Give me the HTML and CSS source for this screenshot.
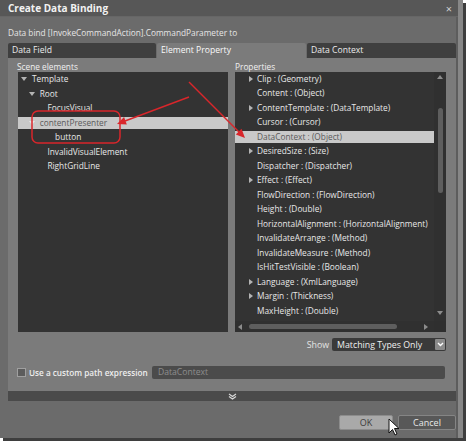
FILE: index.html
```html
<!DOCTYPE html>
<html>
<head>
<meta charset="utf-8">
<title>Create Data Binding</title>
<link rel="stylesheet" href="styles.css">
</head>
<body>
<div class="window">
  <div class="titlebar">
    <span class="title">Create Data Binding</span>
    <span class="close">×</span>
  </div>
  <div class="prompt">Data bind [InvokeCommandAction].CommandParameter to</div>
  <div class="tabs">
    <div class="tab">Data Field</div>
    <div class="tab active">Element Property</div>
    <div class="tab">Data Context</div>
  </div>
  <div class="tabpanel">
    <div class="columns">
      <div class="col col-left">
        <div class="label label-left">Scene elements</div>
        <div class="list tree">
          <div class="row lvl0"><span class="tw down"></span>Template</div>
          <div class="row lvl1"><span class="tw down"></span>Root</div>
          <div class="row lvl2"><span class="tw"></span>FocusVisual</div>
          <div class="row lvl1 selected"><span class="tw down"></span>contentPresenter</div>
          <div class="row lvl3"><span class="tw"></span>button</div>
          <div class="row lvl2"><span class="tw"></span>InvalidVisualElement</div>
          <div class="row lvl2"><span class="tw"></span>RightGridLine</div>
        </div>
      </div>
      <div class="col col-right">
        <div class="label">Properties</div>
        <div class="list plist">
          <div class="items">
            <div class="row"><span class="tw right"></span>Clip : (Geometry)</div>
            <div class="row"><span class="tw"></span>Content : (Object)</div>
            <div class="row"><span class="tw right"></span>ContentTemplate : (DataTemplate)</div>
            <div class="row"><span class="tw"></span>Cursor : (Cursor)</div>
            <div class="row selected"><span class="tw"></span>DataContext : (Object)</div>
            <div class="row"><span class="tw right"></span>DesiredSize : (Size)</div>
            <div class="row"><span class="tw"></span>Dispatcher : (Dispatcher)</div>
            <div class="row"><span class="tw right"></span>Effect : (Effect)</div>
            <div class="row"><span class="tw"></span>FlowDirection : (FlowDirection)</div>
            <div class="row"><span class="tw"></span>Height : (Double)</div>
            <div class="row"><span class="tw"></span>HorizontalAlignment : (HorizontalAlignment)</div>
            <div class="row"><span class="tw"></span>InvalidateArrange : (Method)</div>
            <div class="row"><span class="tw"></span>InvalidateMeasure : (Method)</div>
            <div class="row"><span class="tw"></span>IsHitTestVisible : (Boolean)</div>
            <div class="row"><span class="tw right"></span>Language : (XmlLanguage)</div>
            <div class="row"><span class="tw right"></span>Margin : (Thickness)</div>
            <div class="row"><span class="tw"></span>MaxHeight : (Double)</div>
          </div>
          <div class="vscroll">
            <span class="sarrow up"></span>
            <span class="vthumb"></span>
            <span class="sarrow dn"></span>
          </div>
          <div class="hscroll">
            <span class="sarrow lt"></span>
            <span class="hthumb"></span>
            <span class="sarrow rt"></span>
          </div>
          <div class="corner"></div>
        </div>
      </div>
    </div>
    <div class="showrow">
      <span class="showlabel">Show</span>
      <div class="select">
        <span class="selvalue">Matching Types Only</span>
        <span class="dd">
          <svg width="7" height="5" viewBox="0 0 7 5"><path d="M1 1 L3.5 3.5 L6 1" fill="none" stroke="#fff" stroke-width="1.4"/></svg>
        </span>
      </div>
    </div>
    <div class="pathrow">
      <span class="check"></span>
      <span class="pathlabel">Use a custom path expression</span>
      <div class="pathinput">DataContext</div>
    </div>
  </div>
  <div class="expander">
    <svg width="9" height="7" viewBox="0 0 9 7"><path d="M1 1 L4.5 3.5 L8 1 M1 3.5 L4.5 6 L8 3.5" fill="none" stroke="#d8d8d8" stroke-width="1.2"/></svg>
  </div>
  <div class="buttons">
    <button class="btn ok">OK</button>
    <button class="btn cancel">Cancel</button>
  </div>
</div>

<!-- red callouts drawn over the dialog -->
<svg class="marks" width="469" height="446" viewBox="0 0 469 446">
  <rect x="32" y="111" width="88" height="32" rx="6" ry="6" fill="none" stroke="#d9262b" stroke-width="1.5"/>
  <line x1="189" y1="97" x2="125" y2="121" stroke="#d9262b" stroke-width="1.4"/>
  <polygon points="117,124 126.8,124.6 124.1,117.1" fill="#d9262b"/>
  <line x1="189" y1="82" x2="239" y2="132" stroke="#d9262b" stroke-width="1.4"/>
  <polygon points="245,138 235.8,134.5 241.5,128.8" fill="#d9262b"/>
</svg>

<!-- mouse pointer resting on OK -->
<svg class="pointer" width="12" height="18" viewBox="0 0 12 18">
  <path d="M1 1 L1 15 L4.5 11.5 L7 17 L9 16 L6.5 10.5 L11 10.5 Z" fill="#fff" stroke="#111" stroke-width="1" stroke-linejoin="round"/>
</svg>
</body>
</html>
```

FILE: styles.css
```css
html, body {
  margin: 0;
  padding: 0;
}

body {
  width: 469px;
  height: 446px;
  overflow: hidden;
  background: #ffffff;
  position: relative;
  font-family: "Open Sans", "Noto Sans", sans-serif;
  font-size: 8.3px;
  color: #e8e8e8;
}

.window {
  width: 458px;
  height: 438px;
  background: #6b6b6b;
  border-right: 5px solid #878787;
  box-shadow: inset -2px 0 0 #5d5d5d, 3px 3px 0 #3e3e3e;
}

/* title bar */
.titlebar {
  height: 17px;
  background: #575757;
  border-bottom: 1px solid #666;
  box-sizing: border-box;
  display: flex;
  align-items: center;
  justify-content: space-between;
  padding: 0 6px 0 8px;
}

.title {
  font-weight: 700;
  font-size: 10px;
  color: #f2f2f2;
}

.close {
  font-size: 11px;
  color: #d0d0d0;
}

.prompt {
  height: 26px;
  box-sizing: border-box;
  padding: 9px 8px 0;
  line-height: 14px;
  font-size: 8.3px;
  color: #e6e6e6;
  white-space: nowrap;
}

/* tab strip */
.tabs {
  height: 15px;
  display: flex;
  gap: 1px;
  padding-left: 8px;
  font-size: 8.6px;
}

.tab {
  width: 148px;
  padding-left: 4px;
  box-sizing: border-box;
  line-height: 15px;
  background: #3f3f3f;
  color: #ececec;
  border-radius: 2px 2px 0 0;
}

.tab + .tab {
  width: 149px;
}

.tab.active {
  background: #7b7b7b;
  color: #fafafa;
}

.tabpanel {
  margin-left: 8px;
  width: 448px;
  height: 333px;
  box-sizing: border-box;
  background: #7b7b7b;
  padding: 4px 10px 0;
}

.columns {
  display: flex;
  gap: 7px;
}

.col-left {
  width: 210px;
}

.col-right {
  width: 211px;
}

.label {
  height: 10px;
  line-height: 10px;
  color: #f0f0f0;
}

.label-left {
  margin-left: -1px;
}

.list {
  height: 260px;
  background: #333333;
  box-sizing: border-box;
  overflow: hidden;
}

.tree {
  padding-top: 1px;
}

.row {
  height: 12.5px;
  line-height: 12.5px;
  margin-bottom: 2px;
  display: flex;
  align-items: center;
  white-space: nowrap;
  color: #e8e8e8;
}

.row.selected {
  background: #c9c9c9;
  color: #5a5a5a;
}

/* expand/collapse twisty */
.tw {
  width: 12px;
  height: 12px;
  flex: none;
  position: relative;
}

.tw.down::before,
.tw.right::before {
  content: "";
  position: absolute;
  width: 0;
  height: 0;
}

.tw.down::before {
  left: 1px;
  top: 4px;
  border-left: 3px solid transparent;
  border-right: 3px solid transparent;
  border-top: 4px solid #b4b4b4;
}

.tw.right::before {
  left: 4px;
  top: 3px;
  border-top: 3px solid transparent;
  border-bottom: 3px solid transparent;
  border-left: 4px solid #b4b4b4;
}

.row.selected .tw.down::before {
  border-top-color: #e6e6e6;
}

.lvl0 { padding-left: 2px; }
.lvl1 { padding-left: 9.7px; }
.lvl2 { padding-left: 17.4px; }
.lvl3 { padding-left: 25.1px; }

/* properties list with scrollbars */
.plist {
  display: grid;
  grid-template-columns: 1fr 12px;
  grid-template-rows: 1fr 11px;
}

.items {
  padding-top: 0.5px;
  overflow: hidden;
}

.items .row {
  padding-left: 10px;
}

.vscroll {
  display: flex;
  flex-direction: column;
  align-items: center;
  background: #303030;
}

.hscroll {
  display: flex;
  align-items: center;
  background: #303030;
  padding-left: 3px;
}

.corner {
  background: #2f2f2f;
}

.sarrow {
  width: 0;
  height: 0;
  flex: none;
}

.sarrow.up {
  margin-top: 3px;
  border-left: 3px solid transparent;
  border-right: 3px solid transparent;
  border-bottom: 4px solid #8c8c8c;
}

.sarrow.dn {
  margin-top: auto;
  margin-bottom: 6px;
  border-left: 3px solid transparent;
  border-right: 3px solid transparent;
  border-top: 4px solid #8c8c8c;
}

.sarrow.lt {
  border-top: 3px solid transparent;
  border-bottom: 3px solid transparent;
  border-right: 4px solid #8c8c8c;
}

.sarrow.rt {
  margin-left: auto;
  margin-right: 6px;
  border-top: 3px solid transparent;
  border-bottom: 3px solid transparent;
  border-left: 4px solid #8c8c8c;
}

.vthumb {
  margin-top: 29px;
  width: 5px;
  height: 85px;
  border-radius: 3px;
  background: #5e5e5e;
}

.hthumb {
  margin-left: 7px;
  width: 148px;
  height: 5px;
  border-radius: 3px;
  background: #5e5e5e;
}

/* Show filter */
.showrow {
  margin-top: 6px;
  height: 13px;
  display: flex;
  justify-content: flex-end;
  align-items: center;
  gap: 3px;
  font-size: 8.8px;
}

.showlabel {
  color: #e4e4e4;
}

.select {
  width: 114px;
  height: 13px;
  box-sizing: border-box;
  background: #3a3a3a;
  border-radius: 2px;
  display: flex;
  align-items: center;
  padding-left: 5px;
  color: #f0f0f0;
}

.selvalue {
  flex: 1;
}

.dd {
  width: 10px;
  height: 11px;
  margin-right: 1px;
  background: #8a8a8a;
  border-radius: 1px;
  display: flex;
  align-items: center;
  justify-content: center;
}

/* custom path */
.pathrow {
  margin-top: 15px;
  height: 13px;
  display: flex;
  align-items: center;
  font-size: 8.2px;
}

.check {
  width: 9px;
  height: 9px;
  box-sizing: border-box;
  margin-left: -1px;
  border: 1px solid #a0a0a0;
  background: #5c5c5c;
}

.pathlabel {
  margin-left: 3px;
  white-space: nowrap;
  font-weight: 600;
  color: #eeeeee;
}

.pathinput {
  margin-left: auto;
  margin-right: 1px;
  width: 293px;
  height: 13px;
  box-sizing: border-box;
  background: #4b4b4b;
  border-radius: 2px;
  padding-left: 6px;
  line-height: 13px;
  font-size: 8.6px;
  color: #8e8e8e;
}

.expander {
  margin-left: 8px;
  width: 448px;
  height: 10px;
  background: #4a4a4a;
  display: flex;
  align-items: center;
  justify-content: center;
}

/* dialog buttons */
.buttons {
  margin-top: 14px;
  height: 15px;
  display: flex;
  justify-content: flex-end;
  gap: 5px;
  padding-right: 2px;
}

.btn {
  font: inherit;
  font-size: 9px;
  height: 15px;
  padding: 0;
  border-radius: 2px;
  line-height: 13px;
}

.btn.ok {
  width: 54px;
  background: #a9a9a9;
  border: 1px solid #8c8c8c;
  color: #3c3c3c;
}

.btn.cancel {
  width: 58px;
  background: #585858;
  border: 1px solid #858585;
  color: #e8e8e8;
}

.marks {
  position: absolute;
  left: 0;
  top: 0;
  pointer-events: none;
}

.pointer {
  position: absolute;
  left: 388px;
  top: 418px;
  pointer-events: none;
}
```
